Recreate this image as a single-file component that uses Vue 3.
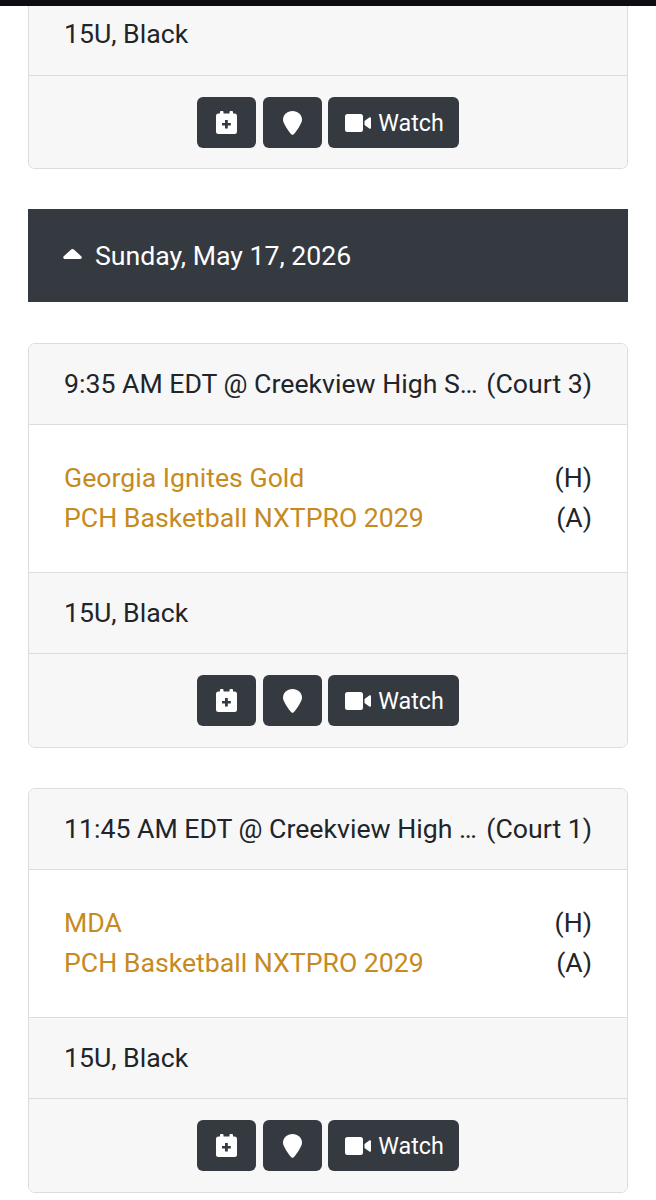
<template>
  <div class="page">
    <div class="topbar"></div>
    <div class="content">
      <div class="card first">
        <div class="row-muted">15U, Black</div>
        <div class="actions">
          <a class="btn square"><svg viewBox="0 0 21 23" class="i-cal"><path fill="#fff" fill-rule="evenodd" d="M5 0h1.500a1 1 0 0 1 1 1v1.500h6V1a1 1 0 0 1 1-1H16a1 1 0 0 1 1 1v1.500h1.500A2.500 2.500 0 0 1 21 5v15.500a2.500 2.500 0 0 1-2.500 2.500h-16A2.500 2.500 0 0 1 0 20.500V5a2.500 2.500 0 0 1 2.500-2.500H4V1a1 1 0 0 1 1-1zM9 9v3H6v2.600h3v3h2.800v-3h3V12h-3V9z"/></svg></a>
          <a class="btn square"><svg viewBox="0 0 19 24" class="i-pin"><path fill="#fff" d="M9.500 0c5.300 0 9.500 3.900 9.500 8.800 0 3.400-5.500 11.600-8.300 14.500-.7.700-1.700.7-2.400 0C5.500 20.400 0 12.200 0 8.800 0 3.900 4.200 0 9.500 0z"/></svg></a>
          <a class="btn"><svg viewBox="0 0 26 18" class="i-vid"><path fill="#fff" d="M2.500 0h13A2.500 2.500 0 0 1 18 2.500v13a2.500 2.500 0 0 1-2.500 2.500h-13A2.500 2.500 0 0 1 0 15.500v-13A2.500 2.500 0 0 1 2.500 0zM19.500 7l4.800-3.600c.7-.5 1.700 0 1.700.9v9.400c0 .9-1 1.400-1.700.9L19.500 11z"/></svg>Watch</a>
        </div>
      </div>

      <div class="day-head">
        <svg viewBox="0 0 19 10" class="i-caret"><path fill="#fff" d="M8.200.5c.7-.7 1.900-.7 2.600 0l7.400 6.700c1.200 1.100.4 2.800-1.200 2.800H2c-1.600 0-2.400-1.700-1.200-2.800z"/></svg>
        <span>Sunday, May 17, 2026</span>
      </div>

      <div class="card" v-for="g in games" :key="g.time">
        <div class="row-muted head">
          <span class="place">{{ g.time }} @ Creekview High School</span>
          <span class="court">({{ g.court }})</span>
        </div>
        <div class="teams">
          <div class="team"><a>{{ g.home }}</a><span>(H)</span></div>
          <div class="team"><a>{{ g.away }}</a><span>(A)</span></div>
        </div>
        <div class="row-muted">15U, Black</div>
        <div class="actions">
          <a class="btn square"><svg viewBox="0 0 21 23" class="i-cal"><path fill="#fff" fill-rule="evenodd" d="M5 0h1.500a1 1 0 0 1 1 1v1.500h6V1a1 1 0 0 1 1-1H16a1 1 0 0 1 1 1v1.500h1.500A2.500 2.500 0 0 1 21 5v15.500a2.500 2.500 0 0 1-2.500 2.500h-16A2.500 2.500 0 0 1 0 20.500V5a2.500 2.500 0 0 1 2.500-2.500H4V1a1 1 0 0 1 1-1zM9 9v3H6v2.600h3v3h2.800v-3h3V12h-3V9z"/></svg></a>
          <a class="btn square"><svg viewBox="0 0 19 24" class="i-pin"><path fill="#fff" d="M9.500 0c5.300 0 9.500 3.900 9.500 8.800 0 3.400-5.500 11.600-8.300 14.500-.7.700-1.700.7-2.400 0C5.500 20.400 0 12.200 0 8.800 0 3.900 4.200 0 9.500 0z"/></svg></a>
          <a class="btn"><svg viewBox="0 0 26 18" class="i-vid"><path fill="#fff" d="M2.500 0h13A2.500 2.500 0 0 1 18 2.500v13a2.500 2.500 0 0 1-2.500 2.500h-13A2.500 2.500 0 0 1 0 15.500v-13A2.500 2.500 0 0 1 2.500 0zM19.500 7l4.800-3.600c.7-.5 1.700 0 1.700.9v9.400c0 .9-1 1.400-1.700.9L19.500 11z"/></svg>Watch</a>
        </div>
      </div>
    </div>
  </div>
</template>

<script setup>
const games = [
  { time: '9:35 AM EDT', court: 'Court 3', home: 'Georgia Ignites Gold', away: 'PCH Basketball NXTPRO 2029' },
  { time: '11:45 AM EDT', court: 'Court 1', home: 'MDA', away: 'PCH Basketball NXTPRO 2029' }
];
</script>

<style>
html, body {
  background: #fff;
}
</style>

<style scoped>
.page {
  width: 656px;
  height: 1200px;
  overflow: hidden;
  font-family: Roboto, "Liberation Sans", sans-serif;
  font-size: 26.67px;
  line-height: 40px;
  color: #212529;
}
.topbar {
  height: 6px;
  background: #0c0e12;
}
.content {
  padding: 0 28px;
}
.card {
  border: 1px solid #dcdcdc;
  border-radius: 7px;
  background: #fff;
  margin-bottom: 40px;
  overflow: hidden;
}
.card.first {
  border-top: none;
  border-radius: 0 0 7px 7px;
}
.card.first .row-muted {
  padding-top: 8px;
  height: 70px;
}
.card.first .actions {
  height: 92px;
}
.row-muted {
  box-sizing: border-box;
  height: 81px;
  padding: 20px 35px;
  background: #f7f7f7;
  border-bottom: 1px solid #dcdcdc;
}
.head {
  display: flex;
  gap: 8px;
}
.place {
  flex: 1;
  min-width: 0;
  white-space: nowrap;
  overflow: hidden;
  text-overflow: ellipsis;
}
.court {
  white-space: nowrap;
}
.teams {
  box-sizing: border-box;
  height: 148px;
  padding: 33px 35px 0;
  border-bottom: 1px solid #dcdcdc;
}
.team {
  display: flex;
  justify-content: space-between;
}
.team a {
  color: #c68a1e;
}
.actions {
  display: flex;
  justify-content: center;
  gap: 6.500px;
  height: 93px;
  box-sizing: border-box;
  padding-top: 21px;
  background: #f7f7f7;
}
.btn {
  display: flex;
  align-items: center;
  justify-content: center;
  box-sizing: border-box;
  height: 51px;
  padding: 0 15px 0 17px;
  background: #343a40;
  border-radius: 6px;
  color: #fff;
  font-size: 23.300px;
}
.btn.square {
  width: 59px;
  padding: 0;
}
.i-cal {
  width: 21px;
  height: 23px;
}
.i-pin {
  width: 19px;
  height: 24px;
}
.i-vid {
  width: 26px;
  height: 18px;
  margin-right: 7px;
}
.day-head {
  display: flex;
  align-items: center;
  box-sizing: border-box;
  height: 93px;
  margin-bottom: 41px;
  padding: 0 35px;
  background: #343a40;
  color: #fff;
}
.i-caret {
  width: 19px;
  height: 10px;
  margin-right: 13px;
  margin-bottom: 4px;
}
</style>
